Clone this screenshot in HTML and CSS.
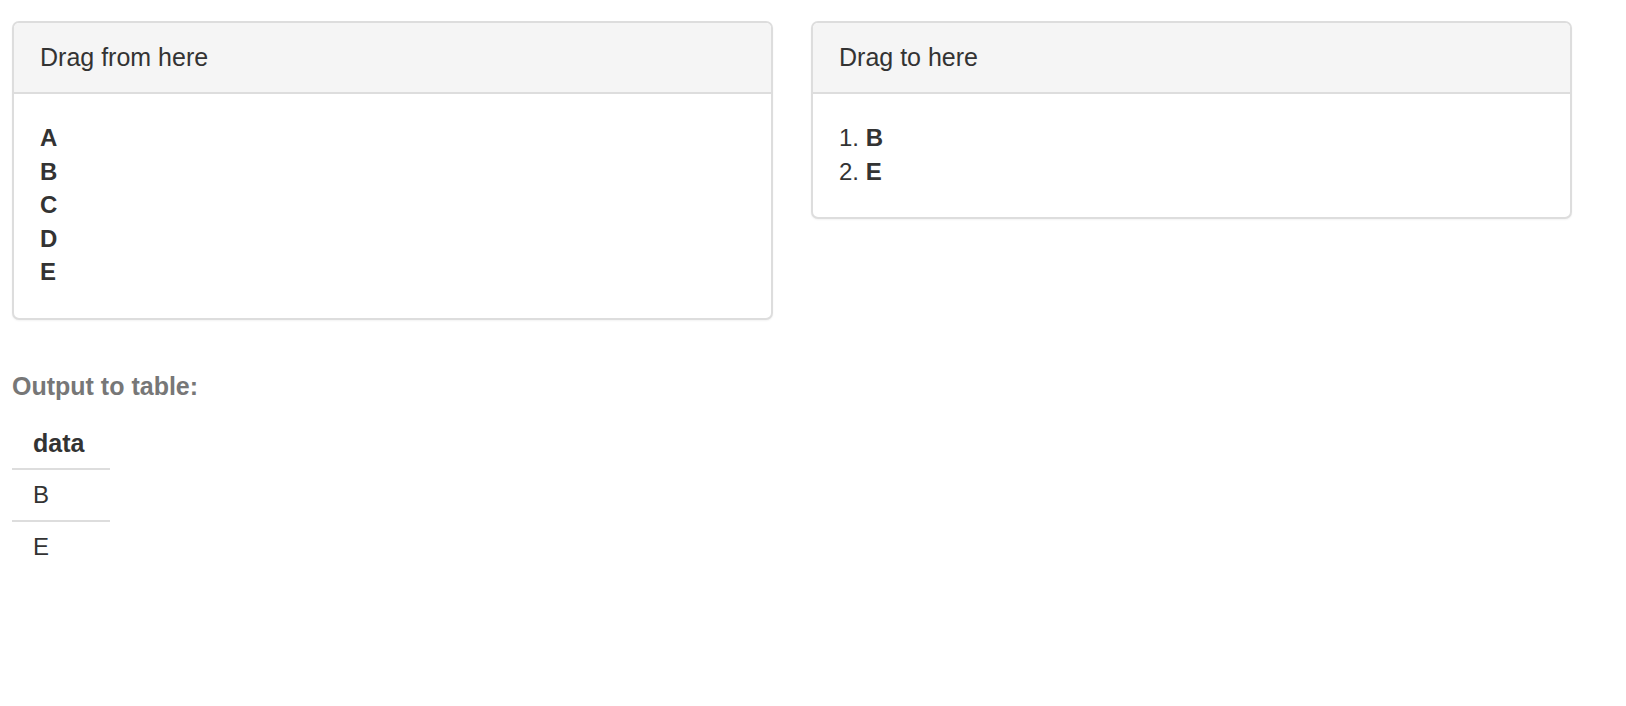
FILE: index.html
```html
<!DOCTYPE html>
<html>
<head>
<meta charset="utf-8">
<link rel="stylesheet" href="styles.css">
</head>
<body>
<div class="page">
  <div class="row">
    <div class="panel">
      <div class="panel-heading">Drag from here</div>
      <div class="panel-body">
        <ul class="items">
          <li><b>A</b></li>
          <li><b>B</b></li>
          <li><b>C</b></li>
          <li><b>D</b></li>
          <li><b>E</b></li>
        </ul>
      </div>
    </div>
    <div class="panel">
      <div class="panel-heading">Drag to here</div>
      <div class="panel-body">
        <ol class="items numbered">
          <li><b>B</b></li>
          <li><b>E</b></li>
        </ol>
      </div>
    </div>
  </div>
  <div class="label">Output to table:</div>
  <table class="data-table">
    <thead><tr><th>data</th></tr></thead>
    <tbody>
      <tr><td>B</td></tr>
      <tr><td>E</td></tr>
    </tbody>
  </table>
</div>
</body>
</html>
```
FILE: styles.css
```css
html, body {
  margin: 0;
  padding: 0;
  background: #fff;
}
body {
  font-family: "Liberation Sans", Arial, sans-serif;
  color: #333;
}
.page {
  padding: 21px 0 0 12px;
}
.row {
  display: grid;
  grid-template-columns: 761px 761px;
  column-gap: 38px;
  align-items: start;
}
.panel {
  border: 2px solid #ddd;
  border-radius: 7px;
  background: #fff;
  box-shadow: 0 1px 2px rgba(0,0,0,0.05);
  overflow: hidden;
}
.panel-heading {
  background: #f5f5f5;
  border-bottom: 2px solid #ddd;
  font-size: 25px;
  line-height: 36px;
  padding: 16px 26px 17px 26px;
}
.panel-body {
  padding: 27px 26px 29px 26px;
}
.items {
  margin: 0;
  padding: 0;
  list-style: none;
  font-size: 24px;
  line-height: 33.5px;
}
.items b {
  font-weight: bold;
}
.numbered {
  list-style: decimal inside;
}
.label {
  margin-top: 49px;
  font-size: 25px;
  line-height: 34px;
  font-weight: bold;
  color: #777;
}
.data-table {
  margin-top: 15px;
  border-collapse: collapse;
  font-size: 24px;
}
.data-table th,
.data-table td {
  text-align: left;
  height: 50px;
  line-height: 50px;
  padding: 0 24px 0 21px;
  width: 53px;
  box-sizing: content-box;
}
.data-table th {
  font-weight: bold;
  font-size: 25px;
  border-bottom: 2px solid #ddd;
}
.data-table tbody tr + tr td {
  border-top: 2px solid #ddd;
}
```
